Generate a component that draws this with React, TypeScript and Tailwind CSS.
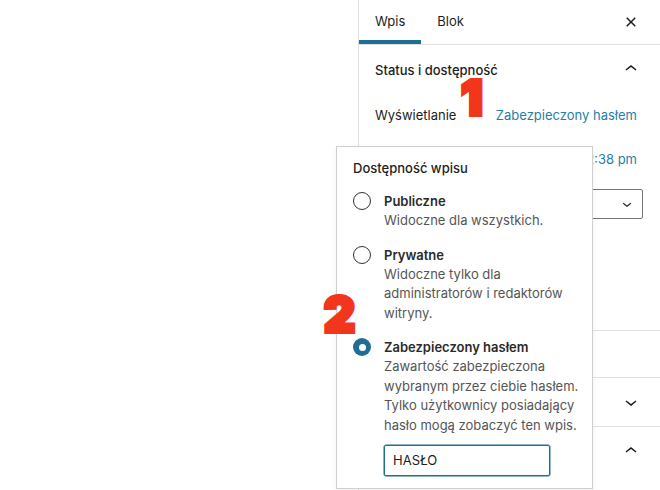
import type { ReactNode } from 'react';

const ChevronUp = ({ size = 24 }: { size?: number }) => (
  <svg viewBox="0 0 24 24" width={size} height={size} fill="currentColor">
    <path d="M6.5 12.4L12 8l5.5 4.4-.9 1.2L12 10l-4.6 3.6-.9-1.2z" />
  </svg>
);

const ChevronDown = ({ size = 24 }: { size?: number }) => (
  <svg viewBox="0 0 24 24" width={size} height={size} fill="currentColor">
    <path d="M17.5 11.6L12 16l-5.5-4.4.9-1.2L12 14l4.6-3.6.9 1.2z" />
  </svg>
);

const CloseSmall = () => (
  <svg viewBox="0 0 24 24" width={24} height={24} fill="currentColor">
    <path d="M12 13.06l3.712 3.713 1.061-1.06L13.061 12l3.712-3.712-1.06-1.06L12 10.938 8.288 7.227l-1.061 1.06L10.939 12l-3.712 3.712 1.06 1.061L12 13.061z" />
  </svg>
);

function Option({ label, lines, checked, children }: { label: string; lines: string[]; checked?: boolean; children?: ReactNode }) {
  return (
    <div className="flex">
      {checked ? (
        <span className="mt-px flex h-[18px] w-[18px] shrink-0 items-center justify-center rounded-full bg-[#1e6f96]">
          <span className="h-[7px] w-[7px] rounded-full bg-white" />
        </span>
      ) : (
        <span className="mt-px h-[18px] w-[18px] shrink-0 rounded-full border-[1.25px] border-[#333] bg-white" />
      )}
      <div className="ml-[13px]">
        <div className="font-semibold leading-5 text-[#2a2a2a]">{label}</div>
        <div className="leading-[19.5px] text-[#555]">
          {lines.map((l) => (
            <div key={l}>{l}</div>
          ))}
        </div>
        {children}
      </div>
    </div>
  );
}

export default function App() {
  return (
    <div className="relative flex h-[490px] w-[660px] overflow-hidden bg-white font-['Inter',sans-serif] text-[13px] text-[#1e1e1e]">
      <div className="flex-1" />

      <aside className="flex w-[302px] shrink-0 flex-col border-l border-[#e0e0e0]">
        {/* tabs */}
        <div className="flex h-[45px] shrink-0 items-stretch border-b border-[#e0e0e0] pr-[17px]">
          <button className="px-4 shadow-[inset_0_-4px_0_#1e6f96]">Wpis</button>
          <button className="px-4">Blok</button>
          <div className="flex-1" />
          <button className="flex items-center">
            <CloseSmall />
          </button>
        </div>

        {/* status panel */}
        <div className="flex h-[286px] shrink-0 flex-col border-b border-[#e0e0e0] pl-4 pr-[17px]">
          <div className="flex h-[48px] items-center justify-between">
            <span className="mt-[3px] font-medium">Status i dostępność</span>
            <ChevronUp />
          </div>
          <div className="mt-[4px] flex h-[38px] items-center justify-between">
            <span>Wyświetlanie</span>
            <span className="pr-[6px] text-[#1f80a8]">Zabezpieczony hasłem</span>
          </div>
          <div className="mt-[6px] flex h-[38px] items-center justify-between">
            <span>Publikuj</span>
            <span className="pr-[6px] text-[#1f80a8]">7 lipca 2021 12:38 pm</span>
          </div>
          <div className="mt-[10px] flex h-[30px] items-center justify-between rounded-[2px] border border-[#757575] pl-2 pr-[6px]">
            <span>Standardowy</span>
            <ChevronDown size={18} />
          </div>
          <div className="mt-4 flex items-center gap-2">
            <span className="h-4 w-4 rounded-[2px] border border-[#757575]" />
            <span>Przypnij na górze bloga</span>
          </div>
        </div>

        <div className="flex h-[47px] shrink-0 items-center border-b border-[#e0e0e0] pl-4 pr-[17px] text-[#cc1818]">
          Przenieś do kosza
        </div>

        <div className="flex h-[49px] shrink-0 items-center justify-between border-b border-[#e0e0e0] pb-px pl-4 pr-[17px]">
          <span className="font-medium">Bezpośredni odnośnik</span>
          <ChevronDown />
        </div>

        <div className="flex flex-col pl-4 pr-[17px]">
          <div className="flex h-[48px] items-center justify-between">
            <span className="font-medium">Kategorie</span>
            <ChevronUp />
          </div>
          <div className="mt-[12px] flex items-center gap-[18px]">
            <span className="h-[14px] w-[14px] rounded-[2px] bg-[#1e6f96]" />
            <span className="text-[#3c3c3c]">Bez kategorii</span>
          </div>
        </div>
      </aside>

      {/* visibility popover */}
      <div className="absolute left-[336px] top-[146px] h-[343px] w-[257px] border border-[#cfcfcf] bg-white pl-4 pr-3 pt-[11px] shadow-[0_2px_6px_rgba(0,0,0,0.06)]">
        <div className="font-medium leading-5">Dostępność wpisu</div>
        <div className="mt-[13px] flex flex-col gap-[14px]">
          <Option label="Publiczne" lines={['Widoczne dla wszystkich.']} />
          <Option label="Prywatne" lines={['Widoczne tylko dla', 'administratorów i redaktorów', 'witryny.']} />
          <Option
            checked
            label="Zabezpieczony hasłem"
            lines={['Zawartość zabezpieczona', 'wybranym przez ciebie hasłem.', 'Tylko użytkownicy posiadający', 'hasło mogą zobaczyć ten wpis.']}
          >
            <div className="mt-[10px] flex h-[31px] w-[166px] items-center rounded-[2px] border-[1.5px] border-[#1e6f96] px-[8px] shadow-[0_0_0_0.5px_#1e6f96]">
              HASŁO
            </div>
          </Option>
        </div>
      </div>

      {/* annotations */}
      <span className="absolute left-[461px] top-[74px] font-['Inter',sans-serif] text-[48px] font-black leading-none text-[#f2361c] [-webkit-text-stroke:4px_#f2361c]">
        1
      </span>
      <span className="absolute left-[324px] top-[291px] font-['Inter',sans-serif] text-[48px] font-black leading-none text-[#f2361c] [-webkit-text-stroke:4px_#f2361c]">
        2
      </span>
    </div>
  );
}
